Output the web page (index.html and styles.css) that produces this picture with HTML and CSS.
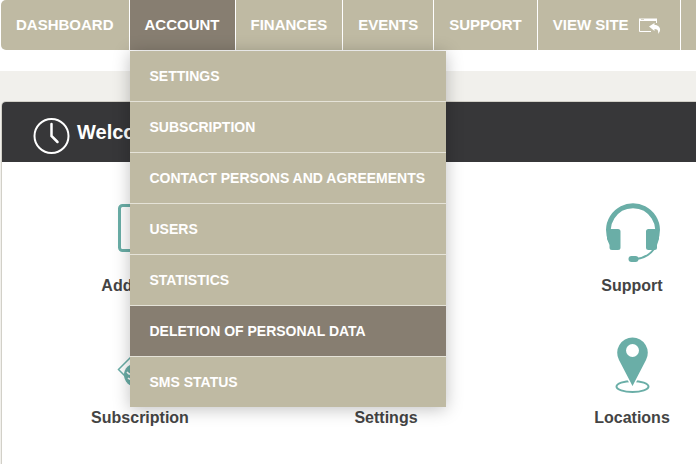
FILE: index.html
```html
<!DOCTYPE html>
<html lang="en">
<head>
<meta charset="utf-8">
<title>Account</title>
<link rel="stylesheet" href="styles.css">
</head>
<body>
<nav class="nav">
  <ul class="nav-list">
    <li><a href="#">DASHBOARD</a></li>
    <li class="open"><a href="#">ACCOUNT</a>
      <ul class="menu">
        <li><a href="#">SETTINGS</a></li>
        <li><a href="#">SUBSCRIPTION</a></li>
        <li><a href="#">CONTACT PERSONS AND AGREEMENTS</a></li>
        <li><a href="#">USERS</a></li>
        <li><a href="#">STATISTICS</a></li>
        <li><a class="active" href="#">DELETION OF PERSONAL DATA</a></li>
        <li><a href="#">SMS STATUS</a></li>
      </ul>
    </li>
    <li><a href="#">FINANCES</a></li>
    <li><a href="#">EVENTS</a></li>
    <li><a href="#">SUPPORT</a></li>
    <li><a href="#">VIEW SITE
      <svg class="site-icon" width="22" height="16" viewBox="0 0 22 16" aria-hidden="true">
        <path d="M17.500 5V1.500H.5v12H12" fill="none" stroke="#fff"/>
        <path d="M0 .5h18v2.500H0z" fill="#fff"/>
        <path d="M2 1.500h3" stroke="#bfbaa3" stroke-width=".6"/>
        <path d="M10 8.500L15.500 5v2C20 7 23.500 11 19 16c.8-3.500-.5-5-3.500-5v2z" fill="#fff"/>
      </svg></a></li>
    <li class="rest"></li>
  </ul>
</nav>
<main class="page">
  <section class="panel">
    <header class="panel-head">
      <svg width="38" height="38" viewBox="0 0 38 38" fill="none" stroke="#fff" aria-hidden="true">
        <circle cx="18.500" cy="19" r="17" stroke-width="2"/>
        <path d="M18.500 7v12l6 6" stroke-width="2.500" stroke-linecap="round"/>
      </svg>
      <h1>Welcome</h1>
    </header>
    <div class="tiles">
      <a class="tile" href="#">
        <svg width="60" height="60" viewBox="0 0 60 60" fill="none" stroke="#6aaea7" stroke-width="3" aria-hidden="true">
          <rect x="9.500" y="2.500" width="41" height="45" rx="3"/>
        </svg>
        <span>Add event</span>
      </a>
      <div class="tile"></div>
      <a class="tile" href="#">
        <svg width="60" height="60" viewBox="0 0 60 60" aria-hidden="true">
          <path d="M9 38A24.500 24.500 0 1 1 53 38" fill="none" stroke="#6aaea7" stroke-width="5"/>
          <path d="M8 26h8a2.500 2.500 0 0 1 2.500 2.500v16A2.500 2.500 0 0 1 16 47h-6A2.500 2.500 0 0 1 7.500 44.500V42L5 36V28zM54 26h-7.500a2.500 2.500 0 0 0-2.500 2.500v16a2.500 2.500 0 0 0 2.500 2.500h6a2.500 2.500 0 0 0 2.500-2.500V42L57 36V28z" fill="#6aaea7"/>
          <path d="M52 46Q46 54.500 34 56" fill="none" stroke="#6aaea7" stroke-width="2"/>
          <rect x="26.500" y="53" width="10" height="6" rx="3" fill="#6aaea7"/>
        </svg>
        <span>Support</span>
      </a>
      <a class="tile" href="#">
        <svg width="60" height="60" viewBox="0 0 60 60" aria-hidden="true">
          <path d="M30 13L8.500 34.500 30 56l21.500-21.500z" fill="none" stroke="#6aaea7" stroke-width="1.500"/>
          <circle cx="25.500" cy="40" r="11.500" fill="#6aaea7"/>
          <path d="M17 37q2 3 5 2M18 43q2 2 5 1" fill="none" stroke="#fff" stroke-width="1.500"/>
        </svg>
        <span>Subscription</span>
      </a>
      <a class="tile" href="#">
        <svg width="60" height="60" viewBox="0 0 60 60" fill="none" stroke="#6aaea7" stroke-width="5" aria-hidden="true">
          <circle cx="30" cy="28" r="15"/>
        </svg>
        <span>Settings</span>
      </a>
      <a class="tile" href="#">
        <svg width="60" height="60" viewBox="0 0 60 60" aria-hidden="true">
          <ellipse cx="30.500" cy="51.500" rx="16" ry="5.500" fill="none" stroke="#6aaea7" stroke-width="2"/>
          <path d="M30.500 51L17 25A15.300 15.300 0 1 1 44 25z" fill="#6aaea7" stroke="#fff" stroke-width="3" paint-order="stroke"/>
          <circle cx="30.500" cy="15.500" r="6.500" fill="#fff"/>
        </svg>
        <span>Locations</span>
      </a>
    </div>
  </section>
</main>
</body>
</html>
```
FILE: styles.css
```css
* { box-sizing: border-box; }

body {
  margin: 0;
  min-height: 100vh;
  overflow-x: hidden;
  background: #fff;
  color: #444;
  font-family: "Liberation Sans", Arial, sans-serif;
  font-weight: bold;
}

a { color: inherit; text-decoration: none; }

ul { margin: 0; padding: 0; list-style: none; }

.nav { padding-left: 1px; margin-bottom: 21px; }

.nav-list {
  display: flex;
  background: #bfbaa3;
  border-radius: 5px 0 0 5px;
  color: #fff;
  font-size: 15px;
}

.nav-list > li {
  position: relative;
  flex: none;
  border-right: 1px solid #fff;
}

.nav-list > .rest { flex: 1; border-right: 0; }

.nav-list > li > a {
  display: flex;
  align-items: center;
  height: 50px;
  padding: 0 15px 2px;
  white-space: nowrap;
}

.nav-list > li:nth-child(6) > a { padding-right: 19px; }

.open > a { background: #877e71; }

.site-icon { margin: 4px 0 0 10px; }

.menu {
  position: absolute;
  z-index: 1;
  top: 51px;
  left: 0;
  background: #bfbaa3;
  box-shadow: 0 2px 16px rgba(0, 0, 0, 0.25);
  font-size: 14px;
}

.menu li + li { border-top: 1px solid #e5e3d8; }

.menu a {
  display: block;
  padding: 0 21px 0 20px;
  line-height: 50px;
  white-space: nowrap;
}

.menu .active { background: #877e71; }

.page {
  padding: 30px 0 0 1px;
  background: #f1f0ec;
}

.panel {
  min-width: 770px;
  min-height: calc(100vh - 101px);
  border: 1px solid #d2d0c8;
  border-bottom: 0;
  border-radius: 5px 5px 0 0;
  background: #fff;
  overflow: hidden;
}

.panel-head {
  display: flex;
  align-items: center;
  gap: 6px;
  height: 60px;
  padding-left: 31px;
  background: #373739;
  color: #fff;
}

.panel-head svg { margin-top: 8px; }

.panel-head h1 {
  margin: 0;
  font-size: 20px;
}

.tiles {
  display: grid;
  grid-template-columns: repeat(3, 1fr);
  row-gap: 39px;
  padding: 41px 15px 0;
}

.tile {
  display: flex;
  flex-direction: column;
  align-items: center;
  gap: 13px;
  font-size: 16px;
  line-height: 20px;
}

.tile svg { flex: none; }
```
